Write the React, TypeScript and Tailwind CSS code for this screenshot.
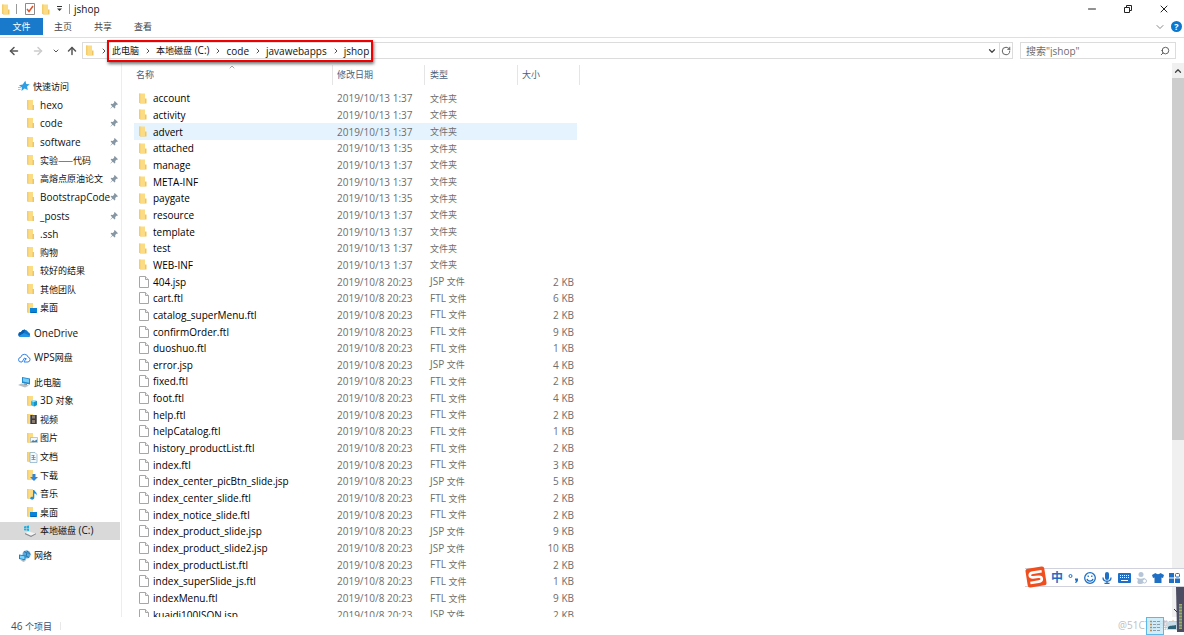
import type { ReactNode } from "react";
import {
  ArrowLeft,
  ArrowRight,
  ArrowUp,
  ChevronDown,
  ChevronRight,
  ChevronUp,
  Minus,
  RotateCw,
  Search,
  X,
} from "lucide-react";

type NavEntry = { name: string; icon: string; pinned?: boolean };
type FileRow = { name: string; date: string; type: string; size?: string };

const quickAccess: NavEntry[] = [
  { name: "hexo", icon: "folder", pinned: true },
  { name: "code", icon: "folder", pinned: true },
  { name: "software", icon: "folder", pinned: true },
  { name: "实验——代码", icon: "folder", pinned: true },
  { name: "高熔点原油论文", icon: "folder", pinned: true },
  { name: "BootstrapCode", icon: "folder", pinned: true },
  { name: "_posts", icon: "folder", pinned: true },
  { name: ".ssh", icon: "folder", pinned: true },
  { name: "购物", icon: "folder" },
  { name: "较好的结果", icon: "folder" },
  { name: "其他团队", icon: "folder" },
  { name: "桌面", icon: "desktop" },
];

const thisPc: NavEntry[] = [
  { name: "3D 对象", icon: "cube" },
  { name: "视频", icon: "video" },
  { name: "图片", icon: "picture" },
  { name: "文档", icon: "document" },
  { name: "下载", icon: "download" },
  { name: "音乐", icon: "music" },
  { name: "桌面", icon: "desktop" },
];

const folder = (name: string, time = "1:37"): FileRow => ({
  name,
  date: `2019/10/13 ${time}`,
  type: "文件夹",
});

const file = (name: string, size: number): FileRow => ({
  name,
  date: "2019/10/8 20:23",
  type: name.endsWith(".jsp") ? "JSP 文件" : "FTL 文件",
  size: `${size} KB`,
});

const rows: FileRow[] = [
  folder("account"),
  folder("activity"),
  folder("advert"),
  folder("attached", "1:35"),
  folder("manage"),
  folder("META-INF"),
  folder("paygate", "1:35"),
  folder("resource"),
  folder("template"),
  folder("test"),
  folder("WEB-INF"),
  file("404.jsp", 2),
  file("cart.ftl", 6),
  file("catalog_superMenu.ftl", 2),
  file("confirmOrder.ftl", 9),
  file("duoshuo.ftl", 1),
  file("error.jsp", 4),
  file("fixed.ftl", 2),
  file("foot.ftl", 4),
  file("help.ftl", 2),
  file("helpCatalog.ftl", 1),
  file("history_productList.ftl", 2),
  file("index.ftl", 3),
  file("index_center_picBtn_slide.jsp", 5),
  file("index_center_slide.ftl", 2),
  file("index_notice_slide.ftl", 2),
  file("index_product_slide.jsp", 9),
  file("index_product_slide2.jsp", 10),
  file("index_productList.ftl", 2),
  file("index_superSlide_js.ftl", 1),
  file("indexMenu.ftl", 9),
  file("kuaidi100JSON.jsp", 2),
];

// Chinese glyphs run larger than the Latin ones, so they get a smaller size
function Label({ text }: { text: string }) {
  return (
    <>
      {text.split(/([\u4e00-\u9fff—]+)/).map((part, i) =>
        i % 2 ? (
          <span key={i} className="font-['Noto_Sans_CJK_SC',sans-serif] text-[9px]">{part}</span>
        ) : (
          part
        )
      )}
    </>
  );
}

function FolderIcon() {
  return (
    <svg viewBox="0 0 8 11" className="h-[11px] w-2 shrink-0" aria-hidden="true">
      <path d="M0 .5h6V10H0z" fill="#fbdc85" />
      <path d="M0 .5h1.500V10H0z" fill="#f3cd6c" />
      <path d="M6 5.500h1.500v5H1V10h5z" fill="#efc65e" />
    </svg>
  );
}

function FileIcon() {
  return (
    <svg viewBox="0 0 10 12" className="h-3 w-[10px] shrink-0" aria-hidden="true">
      <path d="M.5.5h6l3 3v8h-9z" fill="#fff" stroke="#a6a6a6" />
      <path d="M6.500.5v3h3" fill="#eee" stroke="#a6a6a6" />
    </svg>
  );
}

function PinIcon() {
  return (
    <svg viewBox="0 0 8 8" className="h-2 w-2 shrink-0" aria-hidden="true">
      <path d="M4.700 0 8 3.300l-.8.5-.7-.1-1.300 1.400.1 1.600-.8.7-1.700-1.700L0 8l2.200-2.800L.6 3.500l.8-.7 1.500.1 1.300-1.300L4.100.7z" fill="#8796a3" />
    </svg>
  );
}

function NavIcon({ name }: { name: string }) {
  return (
    <svg viewBox="0 0 12 12" className="h-3 w-3 shrink-0" aria-hidden="true">
      {name !== "drive" && (
        <>
          <path d="M1 1h6v9.500H1z" fill="#fbdc85" />
          <path d="M1 1h1.500v9.500H1z" fill="#f3cd6c" />
          <path d="M6.500 6H8v5H2v-.5h4.500z" fill="#efc65e" />
        </>
      )}
      {name === "desktop" && (
        <>
          <path d="M4 6h7v5H4z" fill="#0a84d8" />
          <path d="M5 10h5v1H5z" fill="#0463ad" />
        </>
      )}
      {name === "cube" && (
        <>
          <path d="m8 5 3 1v4l-3 1.500L5 10V6z" fill="#35b9e6" />
          <path d="m8 5 3 1-3 1-3-1z" fill="#a9ebfb" />
          <path d="M8 7v4.500L11 10V6z" fill="#1793c8" />
        </>
      )}
      {name === "video" && (
        <>
          <path d="M4 2h7v9H4z" fill="#3b3b40" />
          <path d="M6 2.500h3v3H6zM6 7h3v3H6z" fill="#8c7f72" />
          <path d="M4.500 2.500v8.500M10.500 2.500v8.500" stroke="#cfcfcf" strokeDasharray="1 1" strokeWidth=".7" />
        </>
      )}
      {name === "picture" && (
        <>
          <path d="M4.500 5.500h7v5h-7z" fill="#f4f8fb" stroke="#9db5c5" strokeWidth=".7" />
          <path d="M5 10l2-2 1.500 1L11 7.500V10z" fill="#3d82ad" />
        </>
      )}
      {name === "document" && (
        <>
          <path d="M4 1.500h5l2 2v8H4z" fill="#f3f9fd" stroke="#83a9c4" strokeWidth=".7" />
          <path d="M5.500 4.500h3M5.500 6.500h4M5.500 8.500h4M7.500 4v5" stroke="#4a91c4" strokeWidth=".8" />
        </>
      )}
      {name === "download" && <path d="M6.500 5h3v3H12l-4 4-4-4h2.500z" fill="#2f86d8" />}
      {name === "music" && (
        <path d="M7 2h1.300c.1 1.500 3 2 2.600 5.500-.6-1.500-1.500-2-2.600-2v4c0 1.500-1.300 2.300-2.700 2.100C3.300 11 4 8.600 7 8.800z" fill="#1c8fe3" />
      )}
      {name === "drive" && (
        <>
          <path d="M0 1.500 2 1v2H0zM2.500 1 5 .6V3H2.500zM0 3.500h2v2l-2-.3zM2.500 3.500H5V6l-2.500-.4z" fill="#12b0ea" />
          <path d="m1 8 4-1.500 6.500 2L7 11z" fill="#f3f3f3" />
          <path d="M1 8v1.200L7 12l5-2.700v-1L7 10.700z" fill="#85898d" />
        </>
      )}
    </svg>
  );
}

function StarIcon() {
  return (
    <svg viewBox="0 0 12 12" className="h-3 w-3" aria-hidden="true">
      <path d="m7.300.8 1 3.100 3.400.3-2.600 2.300.7 3.600-3.200-1.500L3.500 11l.4-3.500L1 5.300l3.700-.7z" fill="#2f9fe4" />
      <path d="M0 7.500h3M0 9.500h2.500" stroke="#74bdea" strokeWidth=".8" />
    </svg>
  );
}

function OneDriveIcon() {
  return (
    <svg viewBox="0 0 13 12" className="h-3 w-[13px]" aria-hidden="true">
      <path d="M3 5a4 4 0 0 1 7.300.3A2.500 2.500 0 0 1 10.500 10h-8A2.500 2.500 0 0 1 3 5z" fill="#1277cf" />
      <path d="M3 5a4 4 0 0 1 4-2.500L6 6 1 9A2.500 2.500 0 0 1 3 5z" fill="#0b5ca9" />
      <path d="m6 6 6.500 3c-.5.700-1.200 1-2 1h-8c-.7 0-1.200-.4-1.500-1z" fill="#2494e6" />
    </svg>
  );
}

function WpsIcon() {
  return (
    <svg viewBox="0 0 13 12" className="h-3 w-[13px]" fill="none" stroke="#3283e8" aria-hidden="true">
      <path d="M4 10H3a2.300 2.300 0 0 1-.3-4.600 3.800 3.800 0 0 1 7.400-.3A2.500 2.500 0 0 1 10 10H6l2-3.500" />
      <path d="m4 10 2.500-4 2 1" />
    </svg>
  );
}

function PcIcon() {
  return (
    <svg viewBox="0 0 13 12" className="h-3 w-[13px]" aria-hidden="true">
      <path d="m4 1 8 1.500v6L4 7z" fill="#2489cc" />
      <path d="m5 2 6 1.200v3.500L5 5.500z" fill="#73cdf5" />
      <path d="m0 9 3.500-1.500L11 9.500 7 11.500z" fill="#b4bec5" />
      <path d="m6 7.500 3 .5v1l-3-.5z" fill="#7a868f" />
    </svg>
  );
}

function NetworkIcon() {
  return (
    <svg viewBox="0 0 13 12" className="h-3 w-[13px]" aria-hidden="true">
      <circle cx="8.500" cy="4.500" r="4" fill="#58a9dc" />
      <path d="M6 1.500 9 3 8 6l3 1.500M9 .7l1.500 2.500 2 1" stroke="#2574ad" fill="none" />
      <path d="m1 4.500 6.500 1v5L1 9z" fill="#1f7fc0" />
      <path d="m2 5.500 4.500.7v3L2 8.200z" fill="#7dd3fa" />
      <path d="m2.500 10.500 3-.5 2 1-2 .8z" fill="#9aa8b1" />
    </svg>
  );
}

function NavLink({ name, icon }: { name: string; icon: ReactNode }) {
  return (
    <a href="#" className="flex h-full items-center gap-[3px] pl-[18px]">
      {icon}
      <span><Label text={name} /></span>
    </a>
  );
}

function NavChild({ name, icon, pinned }: NavEntry) {
  return (
    <li className="flex-1">
      <a href="#" className="flex h-full items-center gap-[2px] pl-[26px] pr-[3px] whitespace-nowrap">
        <NavIcon name={icon} />
        <span className="min-w-0 flex-1"><Label text={name} /></span>
        {pinned && <PinIcon />}
      </a>
    </li>
  );
}

function Sidebar() {
  return (
    <nav aria-label="导航窗格" className="flex w-[122px] shrink-0 flex-col gap-[6px] border-r border-[#ededed] pt-[14px]">
      <ul className="flex h-[240px] shrink-0 flex-col">
        <li className="flex-1"><NavLink name="快速访问" icon={<StarIcon />} /></li>
        {quickAccess.map((entry) => <NavChild key={entry.name} {...entry} />)}
      </ul>
      <div className="h-[19px] shrink-0"><NavLink name="OneDrive" icon={<OneDriveIcon />} /></div>
      <div className="h-[19px] shrink-0"><NavLink name="WPS网盘" icon={<WpsIcon />} /></div>
      <ul className="flex h-[167px] shrink-0 flex-col">
        <li className="flex-1"><NavLink name="此电脑" icon={<PcIcon />} /></li>
        {thisPc.map((entry) => <NavChild key={entry.name} {...entry} />)}
        <li className="mr-px flex-1 bg-[#d9d9d9]">
          <a href="#" aria-current="page" className="flex h-full items-center gap-1 pl-6">
            <NavIcon name="drive" />
            <span><Label text="本地磁盘 (C:)" /></span>
          </a>
        </li>
      </ul>
      <div className="h-[19px] shrink-0"><NavLink name="网络" icon={<NetworkIcon />} /></div>
    </nav>
  );
}

function TitleBar() {
  return (
    <header className="flex h-[18px] shrink-0 items-center">
      <div className="flex flex-1 items-center pl-[2px]">
        <FolderIcon />
        <span className="ml-[6px] h-[10px] w-px bg-[#999]" />
        <button aria-label="属性" className="ml-2">
          <svg viewBox="0 0 10 12" className="h-3 w-[10px]" aria-hidden="true">
            <path d="M.5.5h9v11h-9z" fill="#fff" stroke="#8b8b8b" />
            <path d="m2 6 2 2.500L8 3" fill="none" stroke="#e0542a" strokeWidth="1.500" />
          </svg>
        </button>
        <button aria-label="新建文件夹" className="ml-[7px]"><FolderIcon /></button>
        <button aria-label="自定义快速访问工具栏" className="ml-[7px]">
          <svg viewBox="0 0 5 6" className="h-[6px] w-[5px]" aria-hidden="true">
            <path d="M0 .5h5" stroke="#333" />
            <path d="M0 2.500h5L2.500 5z" fill="#333" />
          </svg>
        </button>
        <span className="ml-[7px] mr-1 h-[10px] w-px bg-[#999]" />
        <h1>jshop</h1>
      </div>
      <div className="flex items-center gap-6 pr-[14px] text-[#222]">
        <button aria-label="最小化"><Minus className="h-3 w-3" strokeWidth={2} /></button>
        <button aria-label="还原">
          <svg viewBox="0 0 12 12" className="h-3 w-3" fill="none" stroke="#222" aria-hidden="true">
            <path d="M2.500 4.500h5v5h-5zM4.500 4.500v-2h5v5h-2" />
          </svg>
        </button>
        <button aria-label="关闭"><X className="h-3 w-3" strokeWidth={2} /></button>
      </div>
    </header>
  );
}

function Ribbon() {
  return (
    <div className="flex h-5 shrink-0 items-start border-b border-[#dfdfdf]">
      <button className="h-[17px] w-[43px] bg-[#1979ca] text-[9px] text-white">文件</button>
      {["主页", "共享", "查看"].map((tab) => (
        <button key={tab} className="h-[17px] w-10 text-[9px] text-[#444]">{tab}</button>
      ))}
      <div className="ml-auto flex h-[17px] items-center gap-[5px] pr-[2px]">
        <button aria-label="展开功能区"><ChevronDown className="h-3 w-3 text-[#888]" /></button>
        <button aria-label="帮助" className="h-[11px] w-[11px] rounded-full bg-[#0b78d0] text-[9px] leading-[11px] font-bold text-white">?</button>
      </div>
    </div>
  );
}

function AddressBar() {
  return (
    <div className="flex h-[25px] shrink-0 items-center pl-2 pr-2">
      <div className="flex w-[74px] items-center text-[#555]">
        <button aria-label="后退"><ArrowLeft className="h-3 w-3" strokeWidth={3} /></button>
        <button aria-label="前进" className="ml-3 text-[#ccc]"><ArrowRight className="h-3 w-3" strokeWidth={3} /></button>
        <button aria-label="最近位置" className="ml-2"><ChevronDown className="h-2 w-2" strokeWidth={3} /></button>
        <button aria-label="上移" className="ml-[6px]"><ArrowUp className="h-3 w-3" strokeWidth={3} /></button>
      </div>
      <div className="flex h-[17px] flex-1 items-center border border-[#dcdcdc] pl-[3px]">
        <FolderIcon />
        <ChevronRight className="ml-[6px] h-2 w-2 text-[#555]" strokeWidth={3} />
        <ol className="relative z-10 -ml-px flex h-[22px] shrink-0 items-center whitespace-nowrap border-2 border-[#f00000] pl-[3px] pr-[2px] shadow-[1px_2px_3px_#777]">
          {["此电脑", "本地磁盘 (C:)", "code", "javawebapps", "jshop"].map((crumb, i) => (
            <li key={crumb} className="flex items-center">
              {i > 0 && <ChevronRight className="ml-[5px] mr-1 h-2 w-2 text-[#555]" strokeWidth={3} />}
              <a href="#"><Label text={crumb} /></a>
            </li>
          ))}
        </ol>
        <button aria-label="以前的位置" className="ml-auto flex h-full w-[14px] items-center justify-center">
          <ChevronDown className="h-[10px] w-[10px] text-[#444]" strokeWidth={3} />
        </button>
        <button aria-label="刷新" className="flex h-full w-[13px] items-center justify-center border-l border-[#dcdcdc]">
          <RotateCw className="h-[10px] w-[10px] text-[#444]" />
        </button>
      </div>
      <div className="ml-[7px] flex h-[17px] w-[156px] items-center border border-[#dcdcdc] pl-[5px] pr-[5px]">
        <input
          aria-label="搜索"
          type="search"
          placeholder={'搜索"jshop"'}
          className="min-w-0 flex-1 bg-transparent placeholder:text-[#6d6d6d]"
        />
        <Search className="h-[10px] w-[10px] -scale-x-100 text-[#444]" />
      </div>
    </div>
  );
}

function FileTable() {
  return (
    <table className="ml-3 h-[560px] w-[446px] table-fixed border-collapse">
      <colgroup>
        <col className="w-[199px]" />
        <col className="w-[92px]" />
        <col className="w-[93px]" />
        <col className="w-[59px]" />
        <col className="w-[3px]" />
      </colgroup>
      <thead className="text-left text-[9px] text-[#4c607a]">
        <tr className="h-[27px]">
          <th className="relative p-0 align-top font-normal">
            <button className="mt-[2px] h-5 w-full border-r border-[#e5e5e5] pl-[2px] text-left">名称</button>
            <ChevronUp className="absolute top-0 left-[94px] h-2 w-2 text-[#777]" />
          </th>
          <th className="p-0 align-top font-normal">
            <button className="mt-[2px] h-5 w-full border-r border-[#e5e5e5] pl-1 text-left">修改日期</button>
          </th>
          <th className="p-0 align-top font-normal">
            <button className="mt-[2px] h-5 w-full border-r border-[#e5e5e5] pl-[5px] text-left">类型</button>
          </th>
          <th colSpan={2} className="p-0 align-top font-normal">
            <button className="mt-[2px] h-5 w-full border-r border-[#e5e5e5] pl-1 text-left">大小</button>
          </th>
        </tr>
      </thead>
      <tbody className="leading-[14px] text-[#6d6d6d]">
        {rows.map((row) => (
          <tr key={row.name} className={row.name === "advert" ? "[&>td:not(:last-child)]:bg-[#e5f3ff]" : ""}>
            <td className="p-0 text-black">
              <div className="flex items-center">
                <span className="flex w-[19px] pl-[5px]">{row.size ? <FileIcon /> : <FolderIcon />}</span>
                {row.name}
              </div>
            </td>
            <td className="p-0 pl-1">{row.date}</td>
            <td className="p-0 pl-[5px]"><Label text={row.type} /></td>
            <td className="p-0 pr-[3px] text-right">{row.size}</td>
            <td className="p-0" />
          </tr>
        ))}
      </tbody>
    </table>
  );
}

function Scrollbar() {
  return (
    <div className="flex w-3 shrink-0 flex-col bg-[#f0f0f0]">
      <button aria-label="向上滚动" className="flex h-[15px] items-center justify-center">
        <ChevronUp className="h-[10px] w-[10px] text-[#444]" strokeWidth={3} />
      </button>
      <div className="h-[362px] bg-[#cdcdcd]" />
    </div>
  );
}

function InputMethodBar() {
  return (
    <div className="absolute right-0 bottom-[48px] z-20 flex h-[19px] items-center gap-[5px] border-y border-[#cfd2dc] bg-white pl-[26px] pr-1 text-[#1f6fc4]">
      <svg viewBox="0 0 22 22" className="absolute -top-[3px] left-0 h-[22px] w-[22px]" aria-hidden="true">
        <g transform="rotate(-9 11 11)">
          <rect x="1.500" y="1.500" width="19" height="19" rx="2.500" fill="#f04e1d" />
          <path d="M17.500 6.200H8.500C4 6.200 4 10.700 8 10.900l5.500.3c4 .3 4 4.800-.5 4.800H4.500" fill="none" stroke="#fff" strokeWidth="2.600" />
        </g>
      </svg>
      <button className="text-[12px] leading-3 font-bold">中</button>
      <button aria-label="标点">
        <svg viewBox="0 0 11 12" className="h-3 w-[11px]" aria-hidden="true">
          <circle cx="2.500" cy="4" r="1.500" fill="none" stroke="currentColor" />
          <path d="M7 6.500h3c.3 2.500-.7 4-2.500 4.500L7 10c.8-.3 1-.8 1-1.500H7z" fill="currentColor" />
        </svg>
      </button>
      <button aria-label="表情">
        <svg viewBox="0 0 12 12" className="h-3 w-3" fill="none" stroke="currentColor" strokeWidth="1.300" aria-hidden="true">
          <circle cx="6" cy="6" r="5.300" />
          <path d="M4.200 3.500v1.500M7.800 3.500v1.500M3 6.800c.8 3 5.200 3 6 0" />
        </svg>
      </button>
      <button aria-label="语音">
        <svg viewBox="0 0 12 12" className="h-3 w-3" aria-hidden="true">
          <rect x="4" width="4" height="8" rx="2" fill="currentColor" />
          <path d="M2 5.500c0 5 8 5 8 0M6 9v3M3.500 11.500h5" fill="none" stroke="currentColor" strokeWidth="1.300" />
        </svg>
      </button>
      <button aria-label="软键盘">
        <svg viewBox="0 0 13 12" className="h-3 w-[13px]" aria-hidden="true">
          <rect y="1" width="13" height="10" rx="1" fill="currentColor" />
          <path d="M2 3.500h9M2 5.500h9" stroke="#fff" strokeDasharray="1 1" />
          <path d="M3 8.500h7" stroke="#fff" />
        </svg>
      </button>
      <button aria-label="登录" className="text-[#b5c4d6]">
        <svg viewBox="0 0 11 12" className="h-3 w-[11px]" aria-hidden="true">
          <circle cx="5" cy="2.500" r="2.500" fill="currentColor" />
          <path d="M0 5.500c2 1.500 8 1.500 9 0L8 8c0 3-1 4-4 4s-3-2-2-4z" fill="currentColor" />
          <circle cx="8.500" cy="9" r="2" fill="#fff" stroke="currentColor" />
        </svg>
      </button>
      <button aria-label="皮肤">
        <svg viewBox="0 0 12 12" className="h-3 w-3" aria-hidden="true">
          <path d="M3.500 1c1 1.500 4 1.500 5 0L12 3l-1 3-1.500-.5V11h-7V5.500L1 6 0 3z" fill="currentColor" />
        </svg>
      </button>
      <button aria-label="工具箱">
        <svg viewBox="0 0 11 12" className="h-3 w-[11px]" aria-hidden="true">
          <path d="M0 1h5v4.500H0zM0 6.500h5V11H0zM6 6.500h5V11H6z" fill="currentColor" />
          <rect x="6.500" y="1.500" width="4" height="3.500" rx="1" fill="none" stroke="currentColor" />
        </svg>
      </button>
    </div>
  );
}

function StatusBar() {
  return (
    <footer className="relative flex h-[18px] shrink-0 items-center pl-[11px] text-[#3a4d70]">
      <span><Label text="46 个项目" /></span>
      <span className="ml-2 h-2 w-px bg-[#e8e8e8]" />
      <span className="absolute right-[6px] bottom-1 text-[10px] whitespace-nowrap text-[#c0c0c0]">@51CTO博客</span>
      <button aria-label="详细信息" className="absolute right-5 bottom-0 flex h-[18px] w-[18px] items-center justify-center border border-[#5cb8e6] bg-[#c5e8f8]/80">
        <svg viewBox="0 0 12 12" className="h-3 w-3" aria-hidden="true">
          <path d="M1 1.500h2M1 4.500h2M1 7.500h2M1 10.500h2" stroke="#b88b5a" strokeWidth="1.500" />
          <path d="M4 1.500h3M8 1.500h3M4 4.500h3M8 4.500h3M4 7.500h3M8 7.500h3M4 10.500h3M8 10.500h3" stroke="#8c9ca8" />
        </svg>
      </button>
      <button aria-label="大图标" className="absolute right-[7px] bottom-[5px]">
        <svg viewBox="0 0 10 8" className="h-2 w-[10px]" aria-hidden="true">
          <path d="M0 0h10v8H0z" fill="#c7dbe8" />
          <path d="M1 5c2-2 5-1 8-2v4H1z" fill="#2d6176" />
        </svg>
      </button>
    </footer>
  );
}

function MonitorWidget() {
  return (
    <svg viewBox="0 0 10 45" className="absolute right-0 bottom-[3px] z-20 h-[45px] w-[10px]" aria-hidden="true">
      <path d="M2 0h8v45H3z" fill="#4c4c62" />
      <path d="M5 17h3v25H5z" fill="#a0a86c" />
      <path d="M5 19h3M5 22h3M5 25h3M5 28h3M5 31h3M5 34h3M5 37h3M5 40h3" stroke="#4b6a58" />
      <path d="m0 22 3 3" stroke="#333" />
    </svg>
  );
}

export default function App() {
  return (
    <div className="relative flex h-screen flex-col overflow-hidden bg-white font-['Open_Sans','Noto_Sans_CJK_SC',sans-serif] text-[10px] leading-3 text-[#111]">
      <TitleBar />
      <Ribbon />
      <AddressBar />
      <div className="flex min-h-0 flex-1 overflow-hidden">
        <Sidebar />
        <main className="min-w-0 flex-1 overflow-hidden">
          <FileTable />
        </main>
        <Scrollbar />
      </div>
      <StatusBar />
      <InputMethodBar />
      <MonitorWidget />
    </div>
  );
}
